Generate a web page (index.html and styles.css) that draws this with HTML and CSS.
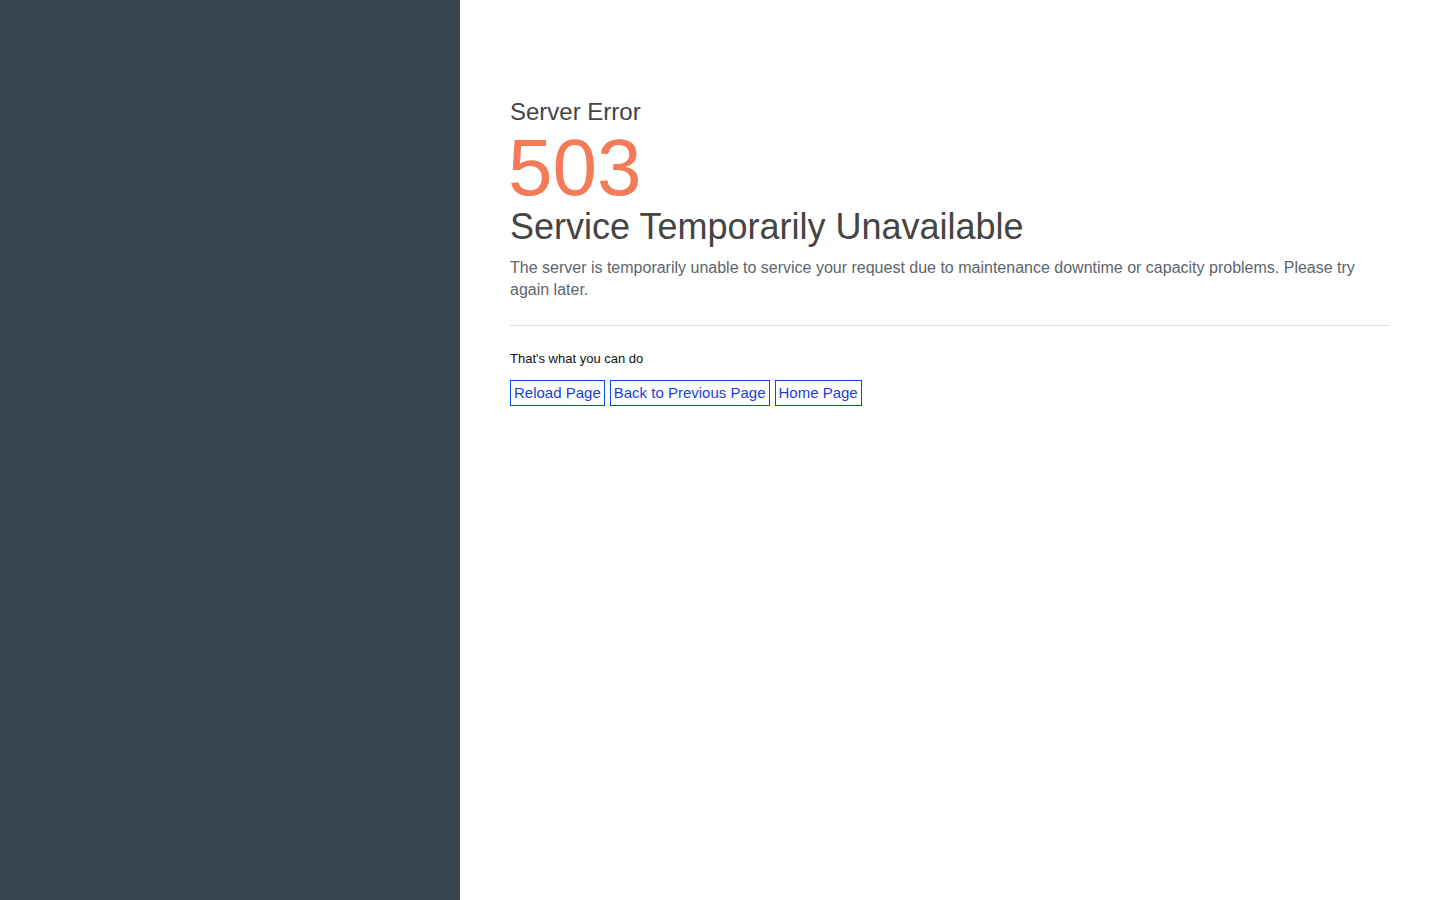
FILE: index.html
```html
<!DOCTYPE html>
<html lang="en">
<head>
<meta charset="utf-8">
<title>503 Service Temporarily Unavailable</title>
<link rel="stylesheet" href="styles.css">
</head>
<body>
<div class="page">
  <aside class="side"></aside>
  <main class="main">
    <div class="kicker">Server Error</div>
    <div class="code">503</div>
    <h1 class="title">Service Temporarily Unavailable</h1>
    <p class="desc">The server is temporarily unable to service your request due to maintenance downtime or capacity problems. Please try again later.</p>
    <hr class="rule">
    <p class="cando">That's what you can do</p>
    <div class="actions">
      <a class="btn" href="#">Reload Page</a>
      <a class="btn" href="#">Back to Previous Page</a>
      <a class="btn" href="#">Home Page</a>
    </div>
  </main>
</div>
</body>
</html>
```

FILE: styles.css
```css
html, body {
  margin: 0;
  padding: 0;
  height: 100%;
  background: #fff;
  font-family: "Liberation Sans", Arial, sans-serif;
}
.page {
  display: flex;
  min-height: 100vh;
}
.side {
  width: 460px;
  flex: none;
  background: #38444f;
}
.main {
  flex: 1;
  padding: 98px 50px 0 50px;
}
.kicker {
  font-size: 24px;
  line-height: 28px;
  color: #444;
}
.code {
  font-size: 80px;
  line-height: 80px;
  color: #f47a58;
  margin-left: -2px;
  margin-top: 2px;
}
.title {
  margin: -1px 0 0 0;
  font-size: 36px;
  font-weight: normal;
  line-height: 40px;
  color: #444;
}
.desc {
  margin: 10px 0 0 0;
  font-size: 16px;
  line-height: 22px;
  color: #5e656c;
}
.rule {
  border: 0;
  border-top: 1px solid #ddd;
  margin: 24px 0 0 0;
}
.cando {
  margin: 25px 0 0 0;
  font-size: 13px;
  line-height: 16px;
  color: #111;
}
.actions {
  display: flex;
  gap: 5px;
  margin-top: 13px;
}
.btn {
  border: 1px solid #0d47f0;
  color: #1a3fd9;
  text-decoration: none;
  font-size: 15px;
  line-height: 24px;
  padding: 0 3px;
}
```
